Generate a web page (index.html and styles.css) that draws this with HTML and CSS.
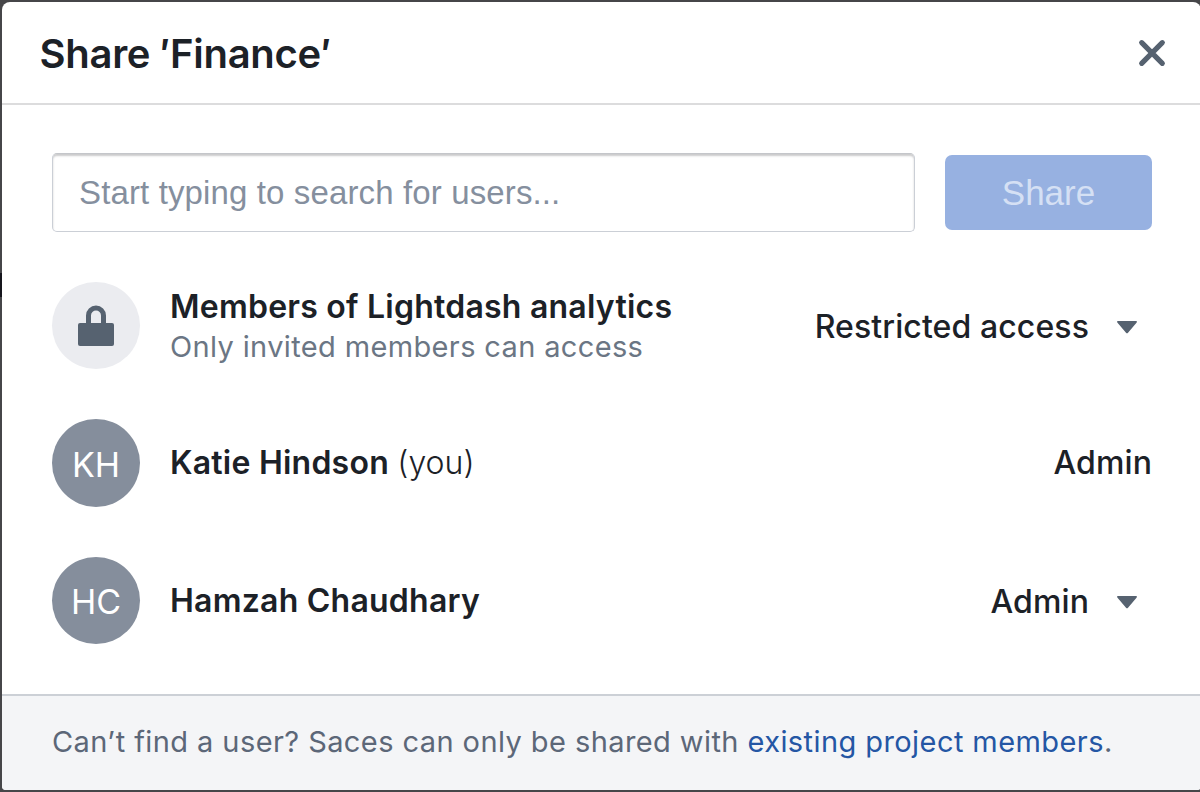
FILE: index.html
```html
<!DOCTYPE html>
<html lang="en">
<head>
<meta charset="utf-8">
<title>Share 'Finance'</title>
<link rel="stylesheet" href="styles.css">
</head>
<body>
<div class="dialog">
  <header class="header">
    <h1 class="title">Share ′Finance′</h1>
    <svg class="close" width="28" height="28" viewBox="0 0 28 28"><path d="M3.7 3.7L24.3 24.3M24.3 3.7L3.7 24.3" stroke="#566270" stroke-width="5.2" stroke-linecap="round"/></svg>
  </header>
  <main class="body">
    <div class="search-row">
      <div class="input"><span>Start typing to search for users...</span></div>
      <div class="button"><span>Share</span></div>
    </div>
    <div class="row">
      <div class="avatar avatar-lock"><svg width="36" height="42" viewBox="0 0 36 42"><path d="M10.5 20V10.5a7.5 7.5 0 0 1 15 0V20" fill="none" stroke="#566270" stroke-width="5"/><rect x="0" y="18" width="36" height="23" rx="2" fill="#566270"/></svg></div>
      <div class="info info-double"><div class="name">Members of Lightdash analytics</div><div class="sub">Only invited members can access</div></div>
      <div class="role">Restricted access</div>
      <svg class="caret" width="20" height="13" viewBox="0 0 20 13"><path d="M.7 0H19.3Q20.4 .3 19.5 1.7L11 11.7Q10 13 9 11.7L.5 1.7Q-.4 .3 .7 0Z" fill="#566270"/></svg>
    </div>
    <div class="row">
      <div class="avatar"><span>KH</span></div>
      <div class="info"><div class="name">Katie Hindson <span class="you">(you)</span></div></div>
      <div class="role role-fixed">Admin</div>
    </div>
    <div class="row">
      <div class="avatar avatar-last"><span>HC</span></div>
      <div class="info"><div class="name">Hamzah Chaudhary</div></div>
      <div class="role">Admin</div>
      <svg class="caret" width="20" height="13" viewBox="0 0 20 13"><path d="M.7 0H19.3Q20.4 .3 19.5 1.7L11 11.7Q10 13 9 11.7L.5 1.7Q-.4 .3 .7 0Z" fill="#566270"/></svg>
    </div>
  </main>
  <footer class="footer"><span>Can’t find a user? Saces can only be shared with <a class="link">existing project members</a>.</span></footer>
</div>
</body>
</html>
```
FILE: styles.css
```css
* { box-sizing: border-box; }
html { overflow: hidden; }
body { margin: 0; width: 1201px; height: 792px; padding: 2px 0 2px 2px; background: linear-gradient(#16161d, #16161d) 0 273px / 2px 24px no-repeat, #464649; font-family: Inter, "Liberation Sans", sans-serif; color: #1c2127; }
.dialog { width: 1199px; height: 788px; background: #fff; border-radius: 8px 8px 4px 4px; overflow: hidden; display: flex; flex-direction: column; white-space: nowrap; }
.header { height: 103px; padding: 1px 35px 0 37.5px; border-bottom: 2px solid #dcdcdd; display: flex; align-items: center; justify-content: space-between; }
.title { margin: 0; padding-top: 2px; font-size: 40px; font-weight: 600; letter-spacing: -0.28px; line-height: 46px; }
.close { display: block; }
.body { flex: 1; padding: 48px 49px 0 50px; }
.search-row { display: flex; gap: 30px; height: 79px; margin-bottom: 50px; }
.input { width: 863px; height: 79px; border: 1px solid #cbcfd6; border-top-color: #c4c6ca; border-radius: 5px; box-shadow: inset 0 2px 2px rgba(17, 20, 24, .22); padding: 2px 26px 0; display: flex; align-items: center; font: 33px "Liberation Sans", sans-serif; letter-spacing: 0.13px; color: #858f9e; }
.button { width: 207px; height: 75px; margin-top: 2px; padding-top: 2px; border-radius: 7px; background: #97b1e1; color: #d5e0f4; display: flex; align-items: center; justify-content: center; font: 35px "Liberation Sans", sans-serif; }
.row { height: 88px; margin-bottom: 49.5px; display: flex; align-items: center; }
.avatar { width: 88px; height: 88px; border-radius: 50%; background: #858e9c; color: #fff; display: flex; align-items: center; justify-content: center; font-size: 34px; margin-right: 30px; }
.avatar span { padding-top: 2px; }
.avatar-lock, .avatar-last { height: 87px; margin-bottom: 1px; }
.avatar-lock { background: #ebecf0; padding-top: 2px; }
.avatar-last span { padding-top: 3px; }
.info { flex: 1; }
.info-double { padding-top: 3px; }
.name { font-size: 32px; font-weight: 600; line-height: 40px; letter-spacing: 0.23px; }
.you { font-weight: 300; letter-spacing: 0; }
.sub { font-size: 29px; line-height: 40px; letter-spacing: 0.36px; color: #6b7684; }
.role { padding-top: 2px; font-size: 32px; font-weight: 500; line-height: 40px; letter-spacing: 0.1px; }
.role-fixed { padding-top: 0; }
.caret { margin: 4px 15px 0 28px; }
.footer { height: 96px; border-top: 2px solid #ccd0d6; background: #f4f5f7; padding: 0 0 4px 50px; display: flex; align-items: center; font-size: 29px; letter-spacing: 0.42px; color: #5c6778; }
.link { color: #2456a4; }
```
